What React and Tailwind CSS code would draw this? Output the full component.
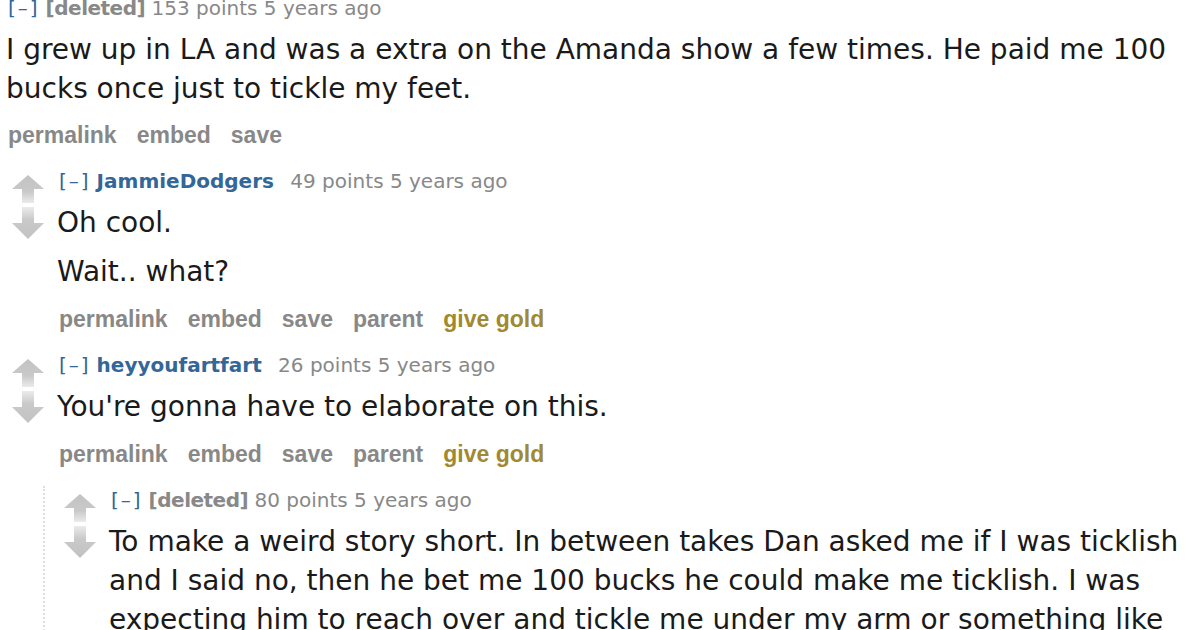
import React from 'react';

const verdana = { fontFamily: '"DejaVu Sans", Verdana, sans-serif' };

const Arrows = () => (
  <div className="flex flex-col items-center gap-[4px] w-[32px] shrink-0 pt-[6px]">
    <svg width="32" height="28" viewBox="0 0 32 28">
      <defs>
        <linearGradient id="upg" x1="0" y1="0" x2="0" y2="1">
          <stop offset="0" stopColor="#c2c2c2" />
          <stop offset="0.6" stopColor="#c9c9c9" />
          <stop offset="1" stopColor="#ebebeb" />
        </linearGradient>
      </defs>
      <path d="M16 0 L32 14 L22 14 L22 28 L10 28 L10 14 L0 14 Z" fill="url(#upg)" />
    </svg>
    <svg width="32" height="32" viewBox="0 0 32 32">
      <defs>
        <linearGradient id="downg" x1="0" y1="0" x2="0" y2="1">
          <stop offset="0" stopColor="#ebebeb" />
          <stop offset="0.4" stopColor="#c9c9c9" />
          <stop offset="1" stopColor="#c2c2c2" />
        </linearGradient>
      </defs>
      <path d="M10 0 L22 0 L22 16 L32 16 L16 32 L0 16 L10 16 Z" fill="url(#downg)" />
    </svg>
  </div>
);

const Tagline = ({ author, deleted, points }) => (
  <div className="pl-[2px] text-[20px] leading-[24px] text-[#888] whitespace-nowrap" style={verdana}>
    <span className="text-[#369] tracking-[2px] mr-[6px]">[–]</span>
    {deleted ? (
      <span className="font-bold text-[#888] tracking-[-0.5px]">[deleted]</span>
    ) : (
      <span className="font-bold text-[#369] mr-[10px]">{author}</span>
    )}{' '}
    <span>{points} points 5 years ago</span>
  </div>
);

const Actions = ({ child }) => (
  <div
    className="flex gap-[20px] text-[23px] leading-[24px] font-bold text-[#888] whitespace-nowrap"
    style={{ fontFamily: '"Liberation Sans", Arial, sans-serif' }}
  >
    <span>permalink</span>
    <span>embed</span>
    <span>save</span>
    {child && <span>parent</span>}
    {child && <span className="text-[#a08930]">give gold</span>}
  </div>
);

const Body = ({ children }) => (
  <div className="text-[28px] leading-[39px] text-[#1a1a1a] whitespace-nowrap" style={verdana}>
    {children}
  </div>
);

export default function App() {
  return (
    <div className="w-[1200px] h-[630px] overflow-hidden bg-white">
      {/* top comment */}
      <div className="pl-[6px] -mt-[4px]">
        <Tagline deleted points="153" />
        <div className="mt-[10px]">
          <Body>
            I grew up in LA and was a extra on the Amanda show a few times. He paid me 100
            <br />
            bucks once just to tickle my feet.
          </Body>
        </div>
        <div className="mt-[15px] pl-[2px]">
          <Actions />
        </div>
      </div>

      {/* child 1 */}
      <div className="flex pl-[12px] mt-[22px]">
        <Arrows />
        <div className="ml-[13px]">
          <Tagline author="JammieDodgers" points="49" />
          <div className="mt-[10px] flex flex-col gap-[10px]">
            <Body>Oh cool.</Body>
            <Body>Wait.. what?</Body>
          </div>
          <div className="mt-[16px] pl-[2px]">
            <Actions child />
          </div>
        </div>
      </div>

      {/* child 2 */}
      <div className="flex pl-[12px] mt-[22px]">
        <Arrows />
        <div className="ml-[13px]">
          <Tagline author="heyyoufartfart" points="26" />
          <div className="mt-[10px]">
            <Body>You're gonna have to elaborate on this.</Body>
          </div>
          <div className="mt-[16px] pl-[2px]">
            <Actions child />
          </div>
        </div>
      </div>

      {/* grandchild */}
      <div className="ml-[43px] mt-[20px] border-l-2 border-dotted border-[#ddd] flex pl-[19px] pt-[2px]">
        <Arrows />
        <div className="ml-[13px]">
          <Tagline deleted points="80" />
          <div className="mt-[10px]">
            <Body>
              To make a weird story short. In between takes Dan asked me if I was ticklish
              <br />
              and I said no, then he bet me 100 bucks he could make me ticklish. I was
              <br />
              expecting him to reach over and tickle me under my arm or something like
            </Body>
          </div>
        </div>
      </div>
    </div>
  );
}
